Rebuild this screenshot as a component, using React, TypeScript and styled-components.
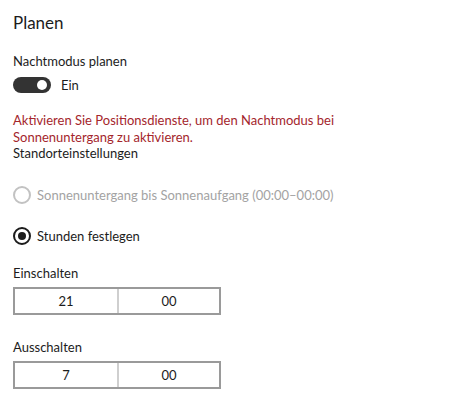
import React from "react";
import styled, { createGlobalStyle } from "styled-components";

const Global = createGlobalStyle`
  html, body { margin: 0; padding: 0; background: #ffffff; }
  body { font-family: Lato, "Noto Sans", sans-serif; color: #1c1c1c; }
`;

const Page = styled.div`
  padding: 12px 13px 0 13px;
  display: flex;
  flex-direction: column;
  align-items: flex-start;
`;

const Title = styled.h1`
  margin: 0;
  font-size: 17px;
  line-height: 22px;
  font-weight: 400;
`;

const Label = styled.div<{ $top: number }>`
  margin-top: ${(p) => p.$top}px;
  font-size: 13px;
  line-height: 18px;
`;

const ToggleRow = styled.div`
  margin-top: 7px;
  display: flex;
  align-items: center;
  gap: 10px;
  font-size: 13px;
  height: 16px;
`;

const Switch = styled.div`
  width: 38px;
  height: 16px;
  border-radius: 8px;
  background: #333333;
  position: relative;
  &::after {
    content: "";
    position: absolute;
    right: 4px;
    top: 3px;
    width: 10px;
    height: 10px;
    border-radius: 50%;
    background: #ffffff;
  }
`;

const ErrorText = styled.div`
  margin-top: 19px;
  font-size: 13px;
  line-height: 16.5px;
  color: #a4262c;
`;

const Plain = styled.div`
  font-size: 13px;
  line-height: 16.5px;
`;

const RadioRow = styled.div<{ $disabled?: boolean; $top: number }>`
  margin-top: ${(p) => p.$top}px;
  display: flex;
  align-items: center;
  gap: 6px;
  font-size: 13px;
  height: 20px;
  color: ${(p) => (p.$disabled ? "#a3a3a3" : "#1c1c1c")};
`;

const RadioCircle = styled.div<{ $checked?: boolean; $disabled?: boolean }>`
  box-sizing: border-box;
  width: 18px;
  height: 18px;
  border-radius: 50%;
  border: 2px solid ${(p) => (p.$disabled ? "#c2c2c2" : "#1c1c1c")};
  display: flex;
  align-items: center;
  justify-content: center;
  &::after {
    content: "";
    display: ${(p) => (p.$checked ? "block" : "none")};
    width: 8px;
    height: 8px;
    border-radius: 50%;
    background: #1c1c1c;
  }
`;

const TimeBox = styled.div`
  margin-top: 5px;
  box-sizing: border-box;
  width: 208px;
  height: 28px;
  border: 2px solid #9a9a9a;
  display: grid;
  grid-template-columns: 1fr 1fr;
`;

const TimeCell = styled.div<{ $divider?: boolean }>`
  display: flex;
  align-items: center;
  justify-content: center;
  font-size: 13px;
  border-left: ${(p) => (p.$divider ? "2px solid #cfcfcf" : "none")};
`;

export default function App() {
  return (
    <>
      <Global />
      <Page>
        <Title>Planen</Title>
        <Label $top={18}>Nachtmodus planen</Label>
        <ToggleRow>
          <Switch />
          <span>Ein</span>
        </ToggleRow>
        <ErrorText>
          Aktivieren Sie Positionsdienste, um den Nachtmodus bei
          <br />
          Sonnenuntergang zu aktivieren.
        </ErrorText>
        <Plain>Standorteinstellungen</Plain>
        <RadioRow $disabled $top={23}>
          <RadioCircle $disabled />
          <span>Sonnenuntergang bis Sonnenaufgang (00:00–00:00)</span>
        </RadioRow>
        <RadioRow $top={21}>
          <RadioCircle $checked />
          <span>Stunden festlegen</span>
        </RadioRow>
        <Label $top={18}>Einschalten</Label>
        <TimeBox>
          <TimeCell>21</TimeCell>
          <TimeCell $divider>00</TimeCell>
        </TimeBox>
        <Label $top={23}>Ausschalten</Label>
        <TimeBox>
          <TimeCell>7</TimeCell>
          <TimeCell $divider>00</TimeCell>
        </TimeBox>
      </Page>
    </>
  );
}
